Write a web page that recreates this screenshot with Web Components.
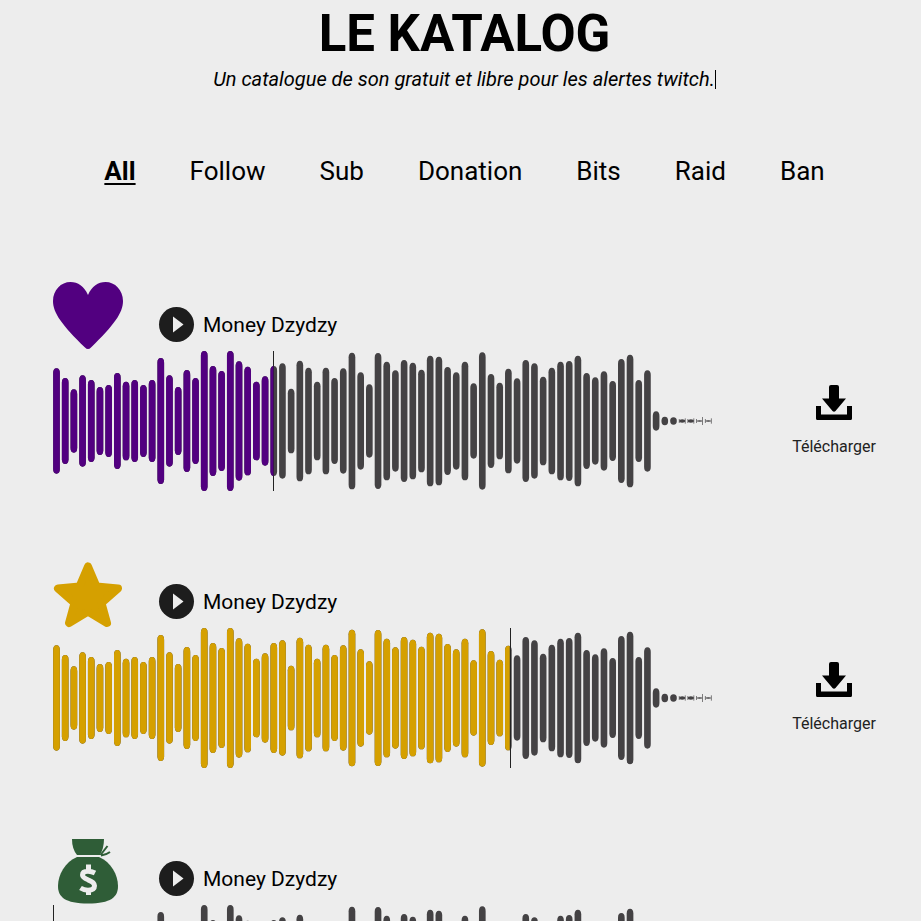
<!DOCTYPE html>
<html lang="fr">
<head>
<meta charset="utf-8">
<title>Le Katalog</title>
<style>
body { margin: 0; background: #ededed; color: #000; font-family: Roboto, "Open Sans", sans-serif; }
</style>
</head>
<body>
<katalog-page>
  <katalog-header slot="header" heading="LE KATALOG">Un catalogue de son gratuit et libre pour les alertes twitch.</katalog-header>
  <katalog-nav slot="nav">
    <a href="#all" aria-current="page">All</a>
    <a href="#follow">Follow</a>
    <a href="#sub">Sub</a>
    <a href="#donation">Donation</a>
    <a href="#bits">Bits</a>
    <a href="#raid">Raid</a>
    <a href="#ban">Ban</a>
  </katalog-nav>
  <sound-item color="#520080" progress="33.4">
    <svg slot="icon" width="70" height="70" viewBox="0 0 70 70" aria-hidden="true"><path fill="#520080" d="M35 14C31 5 25 1 17.500 1C8 1 0 9 0 20C0 32 9 44 32 66.500Q35 69.500 38 66.500C61 44 70 32 70 20C70 9 62 1 52.500 1C45 1 39 5 35 14Z"/></svg>
    Money Dzydzy
    <download-link slot="download"></download-link>
  </sound-item>
  <sound-item color="#d5a000" progress="69.2">
    <svg slot="icon" width="70" height="70" viewBox="0 0 70 70" aria-hidden="true"><path fill="#d5a000" stroke="#d5a000" stroke-width="8" stroke-linejoin="round" d="M35 8.500L43.500 28.500L65 30.500L48.500 45L54 65L35 53.500L16 65L21.500 45L5 30.500L26.500 28.500Z"/></svg>
    Money Dzydzy
    <download-link slot="download"></download-link>
  </sound-item>
  <sound-item color="#2f5d37" progress="0">
    <svg slot="icon" width="70" height="70" viewBox="0 0 70 70" aria-hidden="true"><g fill="#2f5d37"><path d="M19 4H51Q51 13 47 20H24Q19 14 19 4Z"/><path d="M24 22H46C58 27 65 40 65 51C65 62 58 68.500 35 68.500C12 68.500 5 62 5 51C5 40 12 27 24 22Z"/></g><path d="M47.500 20L54.500 11M48 20.500Q53 20 57 17" fill="none" stroke="#2f5d37" stroke-width="2"/><path d="M42 38Q38.500 36.200 35 36.200Q29.500 36.200 29.500 40Q29.500 42.500 35 44.800Q41.500 47.200 41.500 50.800Q41.500 55.200 35 55.200Q31 55.200 27.500 53M35.500 29.500V36M35.500 55V60" fill="none" stroke="#ededed" stroke-width="5"/></svg>
    Money Dzydzy
  </sound-item>
</katalog-page>

<script>
class KatalogPage extends HTMLElement {
  constructor() {
    super();
    this.attachShadow({ mode: "open" }).innerHTML = `
      <style>
        :host { display: block; box-sizing: border-box; height: 100vh; overflow: hidden; padding: 0 0 0 8px; }
        main { padding: 92px 0 0 45px; }
      </style>
      <slot name="header"></slot>
      <slot name="nav"></slot>
      <main><slot></slot></main>`;
  }
}

class KatalogHeader extends HTMLElement {
  connectedCallback() {
    this.attachShadow({ mode: "open" }).innerHTML = `
      <style>
        :host { display: block; text-align: center; }
        h1 { margin: 0; font-size: 51px; line-height: 68px; font-weight: 700; }
        p { margin: 0; font-size: 20px; line-height: 23px; font-style: italic; }
        .caret { display: inline-block; width: 1px; height: 19px; background: #000; vertical-align: -3px; }
      </style>
      <h1>${this.getAttribute("heading")}</h1>
      <p><slot></slot><span class="caret"></span></p>`;
  }
}

class KatalogNav extends HTMLElement {
  constructor() {
    super();
    this.attachShadow({ mode: "open" }).innerHTML = `
      <style>
        :host { display: block; padding-top: 62px; }
        nav { display: flex; justify-content: center; gap: 54px; font-size: 26px; line-height: 36px; }
        ::slotted(a) { color: #000; text-decoration: none; }
        ::slotted(a[aria-current]) { font-weight: 700; text-decoration: underline; text-decoration-thickness: 2px; text-underline-offset: 3px; }
      </style>
      <nav><slot></slot></nav>`;
  }
}

const HALF_HEIGHTS = [
  158, 129, 95, 137, 123, 102, 108, 144, 118, 123, 108, 123, 189, 137, 102, 153, 129, 210, 165, 150,
  210, 179, 163, 118, 134, 165, 173, 97, 181, 160, 118, 160, 129, 158, 205, 146, 110, 204, 178, 152,
  183, 175, 154, 196, 193, 162, 146, 178, 113, 206, 141, 115, 157, 128, 183, 173, 133, 160, 178, 180,
  196, 144, 131, 149, 120, 186, 199, 123, 152, 29, 13, 11
];
const PITCH = 26.07;

class WaveForm extends HTMLElement {
  connectedCallback() {
    const progress = Number(this.getAttribute("progress"));
    const color = this.getAttribute("color");
    const bars = HALF_HEIGHTS.map((h, i) => {
      const x = (i * PITCH + 0.5).toFixed(1);
      return `<rect x="${x}" y="${210 - h}" width="20" height="${2 * h}" rx="10" ry="${Math.min(h, 14)}"/>`;
    }).join("");
    const tail = [72, 73, 74, 75].map((i) => {
      const c = i * PITCH + 10.5;
      const t = i < 74 ? 5 : 2;
      return `<ellipse cx="${c}" cy="210" rx="9" ry="${t}"/><rect x="${c - 10}" y="204" width="2" height="12"/><rect x="${c + 8}" y="${i === 74 ? 198 : 202}" width="2" height="${i === 74 ? 24 : 16}"/>`;
    }).join("");
    const svg = (fill) => `<svg viewBox="0 0 1980 420" preserveAspectRatio="none" fill="${fill}" aria-hidden="true">${bars}${tail}</svg>`;
    this.attachShadow({ mode: "open" }).innerHTML = `
      <style>
        :host { display: grid; height: 140px; }
        svg, .cursor { grid-area: 1 / 1; width: 100%; height: 140px; }
        svg { display: block; }
        svg + svg { clip-path: inset(0 ${100 - progress}% 0 0); }
        .cursor { width: 1px; margin-left: ${progress}%; background: #222; }
      </style>
      ${svg("#444244")}${svg(color)}<div class="cursor"></div>`;
  }
}

class DownloadLink extends HTMLElement {
  constructor() {
    super();
    this.attachShadow({ mode: "open" }).innerHTML = `
      <style>
        :host { display: block; }
        a { display: flex; flex-direction: column; align-items: center; gap: 16px; color: #222; text-decoration: none; font-size: 16px; line-height: 20px; }
        svg { display: block; }
      </style>
      <a href="#download"><svg width="36" height="36" viewBox="0 0 36 36" aria-hidden="true"><path d="M15 0H21Q23 0 23 2V13.500H30L19.500 26Q18 27.500 16.500 26L6 13.500H13V2Q13 0 15 0ZM0 21H5V29.500H31V21H36V33.500Q36 35 34.500 35H1.500Q0 35 0 33.500Z"/></svg><span>Télécharger</span></a>`;
  }
}

class SoundItem extends HTMLElement {
  connectedCallback() {
    this.attachShadow({ mode: "open" }).innerHTML = `
      <style>
        :host { display: grid; grid-template-columns: minmax(0, 1fr) 174px; height: 277px; }
        .head { display: flex; align-items: flex-end; height: 70px; }
        button { width: 35px; height: 35px; margin: 0 9px 9px 36px; padding: 0; border: 0; border-radius: 50%; background: #1d1d1d; display: flex; align-items: center; justify-content: center; }
        h2 { margin: 0 0 10px; font-size: 21px; line-height: 32px; font-weight: 400; }
        ::slotted(svg) { display: block; }
        ::slotted(download-link) { padding-top: 104px; }
        wave-form { margin-right: 34px; }
      </style>
      <div>
        <div class="head">
          <slot name="icon"></slot>
          <button type="button" aria-label="Lecture"><svg width="35" height="35" viewBox="0 0 35 35"><path fill="#ededed" d="M14 9.500L24.500 17.500L14 25.500Z"/></svg></button>
          <h2><slot></slot></h2>
        </div>
        <wave-form color="${this.getAttribute("color")}" progress="${this.getAttribute("progress")}"></wave-form>
      </div>
      <slot name="download"></slot>`;
  }
}

customElements.define("katalog-page", KatalogPage);
customElements.define("katalog-header", KatalogHeader);
customElements.define("katalog-nav", KatalogNav);
customElements.define("wave-form", WaveForm);
customElements.define("download-link", DownloadLink);
customElements.define("sound-item", SoundItem);
</script>
</body>
</html>
